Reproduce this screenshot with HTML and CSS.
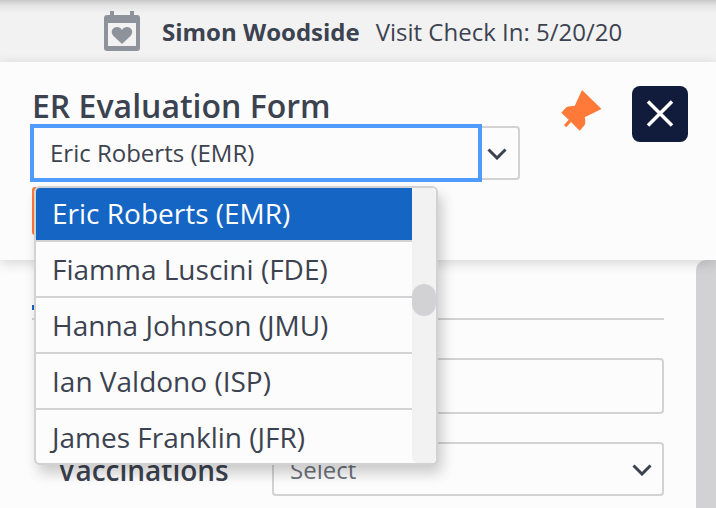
FILE: index.html
```html
<!DOCTYPE html>
<html lang="en">
  <head>
    <meta charset="UTF-8" />
    <title>ER Evaluation Form</title>
    <link rel="stylesheet" href="styles.css">
  </head>
  <body>
    <div class="topbar">
      <svg class="cal-icon" viewBox="0 0 36 40" width="36" height="40">
        <path fill="#8e939b" fill-rule="evenodd" d="M6 0h4v4h16V0h4v4h3a3 3 0 0 1 3 3v30a3 3 0 0 1-3 3H3a3 3 0 0 1-3-3V7a3 3 0 0 1 3-3h3zM4 12v23h28V12z"/>
        <path fill="#8e939b" d="M18 33 9.500 25C6 21.500 8 16 13 16c2.200 0 4 1 5 3 1-2 2.800-3 5-3 5 0 7 5.500 3.500 9z"/>
      </svg>
      <span class="patient">Simon Woodside</span>
      <span class="checkin">Visit Check In: 5/20/20</span>
    </div>

    <div class="panel">
      <div class="panel-left">
        <h1>ER Evaluation Form</h1>
        <div class="picker">
          <div class="picker-value">Eric Roberts (EMR)</div>
          <div class="picker-arrow">
            <svg class="chevron" viewBox="0 0 20 12" width="20" height="12"><path d="M1.500 1.500l8.500 8.500 8.500-8.500" fill="none" stroke="#3c4350" stroke-width="3"/></svg>
          </div>
        </div>
        <div class="orange-btn"></div>
      </div>
      <div class="panel-actions">
        <svg class="pin" viewBox="0 0 42 42" width="42" height="42">
          <path fill="#ff7a38" d="M22 0 41.500 19 24.700 27.300C25.500 30 25.500 33 24.700 35L19.700 40.700 11 32 6.300 37.300 4 35 8.700 29.700 1.300 22.700 6.300 17.300C9 16 12 16 14.700 16z"/>
        </svg>
        <button class="close-btn" type="button">
          <svg viewBox="0 0 28 28" width="28" height="28"><path d="M2 1.500l24 24M26 1.500l-24 24" stroke="#fff" stroke-width="3.500"/></svg>
        </button>
      </div>
    </div>

    <div class="content">
      <div class="form-area">
        <div class="tab-row"><span class="tab-mark"></span></div>
        <div class="field"><div class="field-label"></div><div class="text-input"></div></div>
        <div class="field select-field">
          <div class="field-label">Vaccinations</div>
          <div class="select-input">
            <span>Select</span>
            <svg class="chevron" viewBox="0 0 20 12" width="20" height="12"><path d="M1.500 1.500l8.500 8.500 8.500-8.500" fill="none" stroke="#3c4350" stroke-width="3"/></svg>
          </div>
        </div>
      </div>
      <div class="page-scroll"></div>
    </div>

    <div class="dropdown">
      <ul class="options">
        <li class="active">Eric Roberts (EMR)</li>
        <li>Fiamma Luscini (FDE)</li>
        <li>Hanna Johnson (JMU)</li>
        <li>Ian Valdono (ISP)</li>
        <li>James Franklin (JFR)</li>
      </ul>
      <div class="dd-track"><div class="dd-thumb"></div></div>
    </div>
  </body>
</html>
```

FILE: styles.css
```css
html, body {
  height: 508px;
  overflow: hidden;
}
body {
  margin: 0;
  background-color: #fcfcfc;
  color: #3c4350;
  font-family: "Open Sans", sans-serif;
  position: relative;
}
.topbar {
  height: 62px;
  box-sizing: border-box;
  padding-left: 104px;
  display: flex;
  align-items: center;
  background: linear-gradient(#c9c9c9 0, #e6e6e6 6px, #f2f2f3 14px);
  font-size: 24px;
}
.cal-icon {
  margin-right: 22px;
}
.patient {
  font-weight: 700;
  margin-right: 16px;
}
.panel {
  height: 198px;
  box-sizing: border-box;
  display: flex;
  justify-content: space-between;
  padding: 24px 28px 0 30px;
  background-color: #fcfcfc;
  box-shadow: 0 3px 12px rgba(0, 0, 0, 0.16);
  position: relative;
}
h1 {
  margin: 0 0 0 2px;
  padding-top: 2px;
  font-size: 32px;
  line-height: 36px;
  font-weight: 600;
}
.picker {
  display: flex;
  height: 58px;
  align-items: center;
}
.picker-value {
  width: 452px;
  height: 58px;
  box-sizing: border-box;
  border: 4px solid #4f9bff;
  padding-left: 16px;
  line-height: 50px;
  font-size: 24px;
}
.picker-arrow {
  width: 38px;
  height: 54px;
  box-sizing: border-box;
  border: 2px solid #d2d2d4;
  border-left: 0;
  border-radius: 0 4px 4px 0;
  display: flex;
  align-items: center;
  justify-content: center;
  padding-right: 6px;
}
.chevron {
  margin-top: 1px;
}
.orange-btn {
  width: 40px;
  height: 48px;
  margin: 5px 0 0 2px;
  background-color: #ff7a38;
  border-radius: 3px;
}
.panel-actions {
  display: flex;
  gap: 30px;
  align-items: flex-start;
}
.pin {
  margin-top: 4px;
}
.close-btn {
  width: 56px;
  height: 56px;
  border: 0;
  border-radius: 8px;
  background-color: #111b3b;
  display: flex;
  align-items: center;
  justify-content: center;
}
.content {
  display: flex;
  justify-content: space-between;
  height: 248px;
}
.form-area {
  width: 632px;
  margin-left: 32px;
}
.tab-row {
  height: 60px;
  box-sizing: border-box;
  border-bottom: 2px solid #d2d2d4;
  position: relative;
}
.tab-mark {
  display: block;
  position: absolute;
  left: 0;
  top: 45px;
  width: 4px;
  height: 5px;
  background-color: #1565c4;
}
.field {
  display: flex;
  align-items: center;
  margin-top: 38px;
}
.select-field {
  margin-top: 28px;
}
.field-label {
  width: 240px;
  padding-left: 26px;
  padding-top: 2px;
  box-sizing: border-box;
  font-size: 28px;
  font-weight: 600;
}
.text-input {
  flex: 1;
  height: 56px;
  box-sizing: border-box;
  border: 2px solid #d2d2d4;
  border-radius: 4px;
}
.select-input {
  flex: 1;
  height: 54px;
  box-sizing: border-box;
  border: 2px solid #d2d2d4;
  border-radius: 4px;
  display: flex;
  align-items: center;
  justify-content: space-between;
  padding: 0 10px 0 16px;
  font-size: 24px;
  color: #6d727b;
}
.page-scroll {
  width: 20px;
  background-color: #d2d2d4;
  border-radius: 10px 0 0 0;
}
.dropdown {
  position: absolute;
  left: 34px;
  top: 186px;
  width: 404px;
  height: 279px;
  box-sizing: border-box;
  display: flex;
  border: 2px solid #d2d2d4;
  border-radius: 6px;
  background-color: #fcfcfc;
  box-shadow: 4px 8px 14px rgba(0, 0, 0, 0.2);
  overflow: hidden;
}
.options {
  list-style: none;
  margin: 0;
  padding: 0;
  flex: 1;
  overflow: hidden;
}
.options li {
  height: 56px;
  box-sizing: border-box;
  border-bottom: 2px solid #d2d2d4;
  padding-left: 16px;
  font-size: 28px;
  line-height: 55px;
}
.options li.active {
  height: 54px;
  line-height: 51px;
  background-color: #1565c4;
  color: #fff;
}
.options li:last-child {
  border-bottom: 0;
}
.dd-track {
  width: 24px;
  background-color: #f2f2f3;
  border-radius: 6px;
  padding-top: 96px;
}
.dd-thumb {
  width: 24px;
  height: 32px;
  background-color: #d2d2d4;
  border-radius: 12px;
}
```
